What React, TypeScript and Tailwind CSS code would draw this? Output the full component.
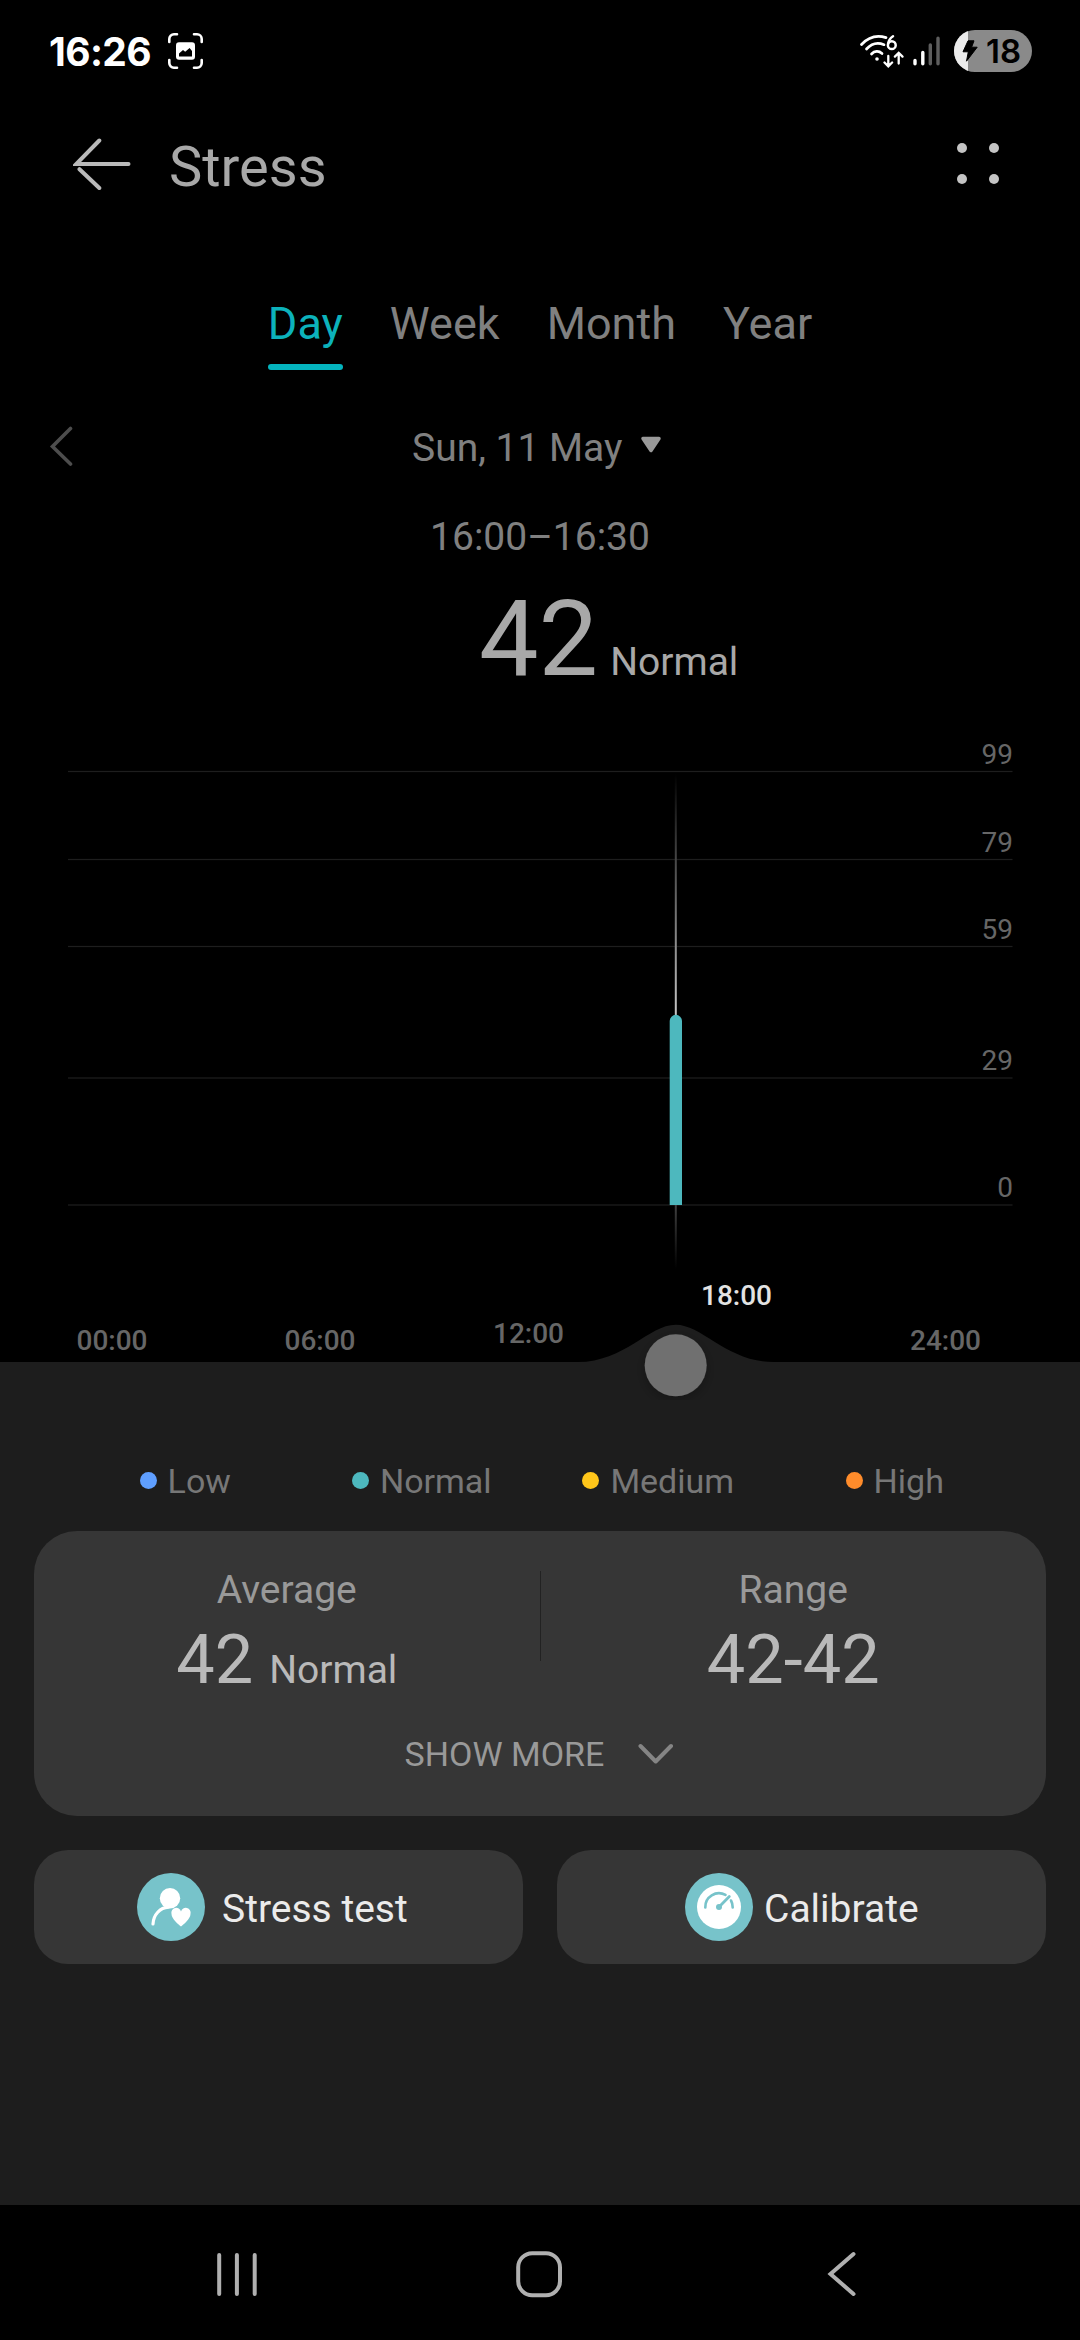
import { clsx } from "clsx";

const tabs = ["Day", "Week", "Month", "Year"];

const gridLines = [
  { value: 99, y: 79.5 },
  { value: 79, y: 167.5 },
  { value: 59, y: 254.5 },
  { value: 29, y: 386 },
  { value: 0, y: 513 },
];

const timeLabels = [
  { label: "00:00", x: 112, y: 658 },
  { label: "06:00", x: 320, y: 658 },
  { label: "12:00", x: 528.5, y: 651 },
  { label: "18:00", x: 736.5, y: 613, active: true },
  { label: "24:00", x: 945.5, y: 658 },
];

const legend = [
  { label: "Low", dot: "bg-[#5f9fff]" },
  { label: "Normal", dot: "bg-[#4db8be]" },
  { label: "Medium", dot: "bg-[#ffc61a]" },
  { label: "High", dot: "bg-[#ff8c2b]" },
];

function StatusBar() {
  return (
    <div className="flex h-[102px] items-center justify-between pr-12 pl-[49px] font-['Inter',sans-serif]">
      <div className="flex items-center">
        <span className="w-[119px] text-[39px] leading-none font-bold tracking-[-0.6px] text-white">16:26</span>
        <svg width="35" height="36" viewBox="0 0 35 36" fill="none">
          <path
            d="M1.3 9V6a4.7 4.7 0 0 1 4.7-4.7h3M26 1.3h3A4.7 4.7 0 0 1 33.7 6v3M33.7 27v3a4.7 4.7 0 0 1-4.7 4.7h-3M9 34.7H6A4.7 4.7 0 0 1 1.3 30v-3"
            stroke="#fff"
            strokeWidth="2.6"
            strokeLinecap="round"
          />
          <rect x="8" y="9.3" width="19" height="17.4" rx="3" fill="#fff" />
          <path d="M11 23.5v-3l4-3.5 2.2 1.8 4.4-3.8 2.4 3v5.5z" fill="#000" />
        </svg>
      </div>
      <div className="flex items-center">
        <svg width="44" height="34" viewBox="0 0 44 34" fill="none" stroke="#fff" strokeWidth="2.7" strokeLinecap="round">
          <path d="M1.5 10.5C8 3.5 17 .8 26 3.6" />
          <path d="M6.5 15C11.5 9.5 17.5 8 24 10.7" />
          <path d="M11.5 20C14.5 16.8 18.8 16.5 22 19.5" />
          <circle cx="17" cy="25" r="1.8" fill="#fff" stroke="none" />
          <circle cx="31.8" cy="11.2" r="3.9" strokeWidth="2.5" />
          <path d="M28.1 9.8C28.5 6.5 30.5 3.8 33 2.2" strokeWidth="2.5" />
          <path d="M28.3 22v10M24.5 28.5l3.800 3.800 3.800-3.800M38.700 29.500V19M34.900 22.600l3.800-3.800 3.800 3.800" strokeWidth="2.3" />
        </svg>
        <svg className="ml-[9px]" width="28" height="30" viewBox="0 0 28 30" strokeWidth="3.4" strokeLinecap="round">
          <path d="M2 24.500v3.300M9.800 16.500v11.300" stroke="#fff" />
          <path d="M17.300 9v18.800M25 2.200v25.600" stroke="#5e5e5e" />
        </svg>
        <div className="relative ml-[13px] h-[42px] w-[78px] overflow-hidden rounded-full bg-[#8a8a8a]">
          <div className="absolute inset-y-0 left-0 w-[14px] bg-[#ebebeb]" />
          <svg className="absolute top-[10px] left-2" width="17" height="22" viewBox="0 0 17 22">
            <path d="M6 .8h6L9.600 7.200h5.600L4.500 21.200l1.800-9.400H1z" fill="#000" stroke="#000" strokeLinejoin="round" />
          </svg>
          <span className="absolute top-0 left-8 text-[33px] leading-[42px] font-semibold text-black">18</span>
        </div>
      </div>
    </div>
  );
}

function Header() {
  return (
    <header className="flex h-[124px] items-center">
      <svg className="ml-[73px]" width="58" height="54" viewBox="0 0 58 54" fill="none" stroke="#bababa" strokeWidth="4" strokeLinecap="round">
        <path d="M55.500 27H3.200L26.300 3.500M6.500 32.200L26.300 51" />
      </svg>
      <h1 className="ml-[38px] pt-[6px] text-[56px] leading-none text-[#a8a8a8]">Stress</h1>
      <div className="mr-[81px] mb-[2px] ml-auto grid grid-cols-2 gap-x-[22px] gap-y-[21px]">
        {[0, 1, 2, 3].map((i) => (
          <span key={i} className="size-[10px] rounded-full bg-[#c4c4c4]" />
        ))}
      </div>
    </header>
  );
}

function Chart() {
  return (
    <svg className="block" width="1080" height="708" viewBox="0 0 1080 708">
      <defs>
        <linearGradient id="cursorTop" x1="0" y1="0" x2="0" y2="1">
          <stop offset="0" stopColor="#000" />
          <stop offset="1" stopColor="#c8c8c8" />
        </linearGradient>
        <linearGradient id="cursorBottom" x1="0" y1="0" x2="0" y2="1">
          <stop offset="0" stopColor="#404040" />
          <stop offset="1" stopColor="#000" />
        </linearGradient>
        <filter id="shadow" x="-50%" y="-50%" width="200%" height="200%">
          <feDropShadow dx="0" dy="4" stdDeviation="6" floodColor="#000" floodOpacity="0.25" />
        </filter>
      </defs>

      {gridLines.map((line) => (
        <g key={line.value}>
          <rect x="68" y={line.y - 0.6} width="944.5" height="1.2" fill="#1e1e1e" />
          <text x="1013" y={line.y - 8} textAnchor="end" fontSize="28" fill="#666">
            {line.value}
          </text>
        </g>
      ))}

      <rect x="674.8" y="82" width="2" height="244" fill="url(#cursorTop)" />
      <rect x="674.8" y="513" width="2" height="64" fill="url(#cursorBottom)" />
      <path d="M669.7 513V329a6.150 6.150 0 0 1 12.300 0v184z" fill="#4db8be" />

      {timeLabels.map((t) => (
        <text
          key={t.label}
          x={t.x}
          y={t.y}
          textAnchor="middle"
          fontSize="28"
          fontWeight="500"
          fill={t.active ? "#e2e2e2" : "#666"}
        >
          {t.label}
        </text>
      ))}

      {/* bottom panel edge, raised around the drag handle */}
      <path
        d="M0 670H578C624 670 649 632.700 675.700 632.700S727.400 670 773.400 670H1080V708H0z"
        fill="#1d1d1d"
      />
      <circle cx="675.7" cy="673.3" r="31" fill="#6f6f6f" filter="url(#shadow)" />
    </svg>
  );
}

function Summary() {
  return (
    <section className="mx-[34px] mt-5 h-[285px] rounded-[43px] bg-[#363636] pt-[29px]">
      <div className="flex">
        <div className="flex flex-1 flex-col items-center">
          <span className="text-[39px] leading-[60px] text-[#999]">Average</span>
          <div className="flex items-baseline gap-4 pt-px text-[#b9b9b9]">
            <span className="text-[68.5px] leading-[78px]">42</span>
            <span className="text-[39px]">Normal</span>
          </div>
        </div>
        <div className="mt-[11px] h-[90px] w-px bg-[#222]" />
        <div className="flex flex-1 flex-col items-center">
          <span className="text-[39px] leading-[60px] text-[#999]">Range</span>
          <span className="pt-px text-[68.5px] leading-[78px] text-[#b9b9b9]">42-42</span>
        </div>
      </div>
      <button className="mx-auto mt-[25px] flex h-[60px] items-center gap-[34px] text-[34px] text-[#999]">
        SHOW MORE
        <svg className="-mt-px" width="37" height="22" viewBox="0 0 37 22" fill="none" stroke="#858585" strokeWidth="4" strokeLinecap="round" strokeLinejoin="round">
          <path d="M2.500 3L17.700 18.500L33 3" />
        </svg>
      </button>
    </section>
  );
}

function StressTestIcon() {
  return (
    <svg width="68" height="68" viewBox="0 0 68 68">
      <circle cx="34" cy="34" r="34" fill="#77c3ca" />
      <circle cx="33" cy="25.3" r="10.2" fill="#fff" />
      <path d="M16 51c.5-9.500 7-16.300 15.500-16.800" fill="none" stroke="#fff" strokeWidth="3.2" strokeLinecap="round" />
      <path
        d="M44 53.500C42 52 34.500 46 34.500 41a4.900 4.900 0 0 1 9.500-2.500A4.900 4.900 0 0 1 53.500 41C53.500 46 46 52 44 53.500z"
        fill="#fff"
      />
    </svg>
  );
}

function CalibrateIcon() {
  return (
    <svg width="68" height="68" viewBox="0 0 68 68" fill="none" stroke="#77c3ca" strokeLinecap="round">
      <circle cx="34" cy="34" r="34" fill="#77c3ca" stroke="none" />
      <circle cx="34" cy="34" r="22" fill="#fff" stroke="none" />
      <path d="M20.300 34.500a13.700 13.700 0 0 1 20.200-12.600M46 27.500a13.700 13.700 0 0 1 1.700 7" strokeWidth="2.6" />
      <path d="M34.500 33.500L44.300 23.500" strokeWidth="2.8" />
      <circle cx="34" cy="34" r="3" fill="#77c3ca" stroke="none" />
    </svg>
  );
}

function NavBar() {
  return (
    <nav className="flex h-[135px] items-start bg-black pt-[45px]">
      <svg className="ml-[216px]" width="42" height="48" viewBox="0 0 42 48" stroke="#b0b0b0" strokeWidth="4" strokeLinecap="round">
        <path d="M3.200 5v39M20.900 5v39M38.700 5v39" />
      </svg>
      <svg className="ml-[257px]" width="48" height="48" viewBox="0 0 48 48" fill="none" stroke="#b0b0b0" strokeWidth="4">
        <rect x="3.2" y="3.2" width="41.8" height="42" rx="14" />
      </svg>
      <svg className="ml-[263px]" width="32" height="48" viewBox="0 0 32 48" fill="none" stroke="#b0b0b0" strokeWidth="4" strokeLinecap="round">
        <path d="M27.500 4L4.500 24L27.500 44" />
      </svg>
    </nav>
  );
}

export default function App() {
  return (
    <div className="flex h-[2340px] w-[1080px] flex-col overflow-hidden bg-black font-['Roboto',sans-serif]">
      <StatusBar />
      <Header />

      <div className="flex justify-center gap-[47px] pt-[68px]">
        {tabs.map((tab, i) => (
          <div key={tab} className="flex flex-col gap-[10px]">
            <span className={clsx("text-[45px] leading-[60px]", i === 0 ? "text-[#0cb2bb]" : "text-[#808080]")}>
              {tab}
            </span>
            {i === 0 && <span className="h-[6px] rounded-full bg-[#04b4be]" />}
          </div>
        ))}
      </div>

      <div className="mt-12 flex h-[60px] items-center">
        <svg className="mb-[3px] ml-[49px]" width="26" height="42" viewBox="0 0 26 42" fill="none" stroke="#4d4d4d" strokeWidth="3.6" strokeLinecap="round">
          <path d="M21.500 2.500L3.500 20.500L21.500 38" />
        </svg>
        <div className="ml-[337px] flex items-center gap-[18px]">
          <span className="text-[39px] leading-[60px] text-[#808080]">Sun, 11 May</span>
          <svg className="-mt-2" width="22" height="17" viewBox="0 0 22 17">
            <path d="M3 2.500h16L11 14.500z" fill="#999" stroke="#999" strokeWidth="3.5" strokeLinejoin="round" />
          </svg>
        </div>
      </div>

      <p className="mt-[29px] text-center text-[39px] leading-[60px] text-[#808080]">16:00–16:30</p>
      <div className="mt-[18px] mb-[-1px] ml-[479px] flex items-baseline text-[#a8a8a8]">
        <span className="text-[106px] leading-[108px]">42</span>
        <span className="ml-[12px] text-[39px]">Normal</span>
      </div>

      <Chart />

      <main className="flex-1 bg-[#1d1d1d] pt-[51px]">
        <div className="grid h-[60px] grid-cols-4 px-[67px]">
          {legend.map((item) => (
            <div key={item.label} className="flex items-center justify-center gap-[11px]">
              <span className={clsx("mb-px size-[17px] rounded-full", item.dot)} />
              <span className="text-[34px] text-[#777]">{item.label}</span>
            </div>
          ))}
        </div>

        <Summary />

        <div className="mx-[34px] mt-[34px] grid grid-cols-2 gap-[34px]">
          <button className="flex h-[114px] items-center rounded-[34px] bg-[#363636] pl-[103px] text-[39px] text-[#ebebeb]">
            <StressTestIcon />
            <span className="ml-[17px] pt-1">Stress test</span>
          </button>
          <button className="flex h-[114px] items-center rounded-[34px] bg-[#363636] pl-[128px] text-[39px] text-[#ebebeb]">
            <CalibrateIcon />
            <span className="ml-[11px] pt-1">Calibrate</span>
          </button>
        </div>
      </main>

      <NavBar />
    </div>
  );
}
